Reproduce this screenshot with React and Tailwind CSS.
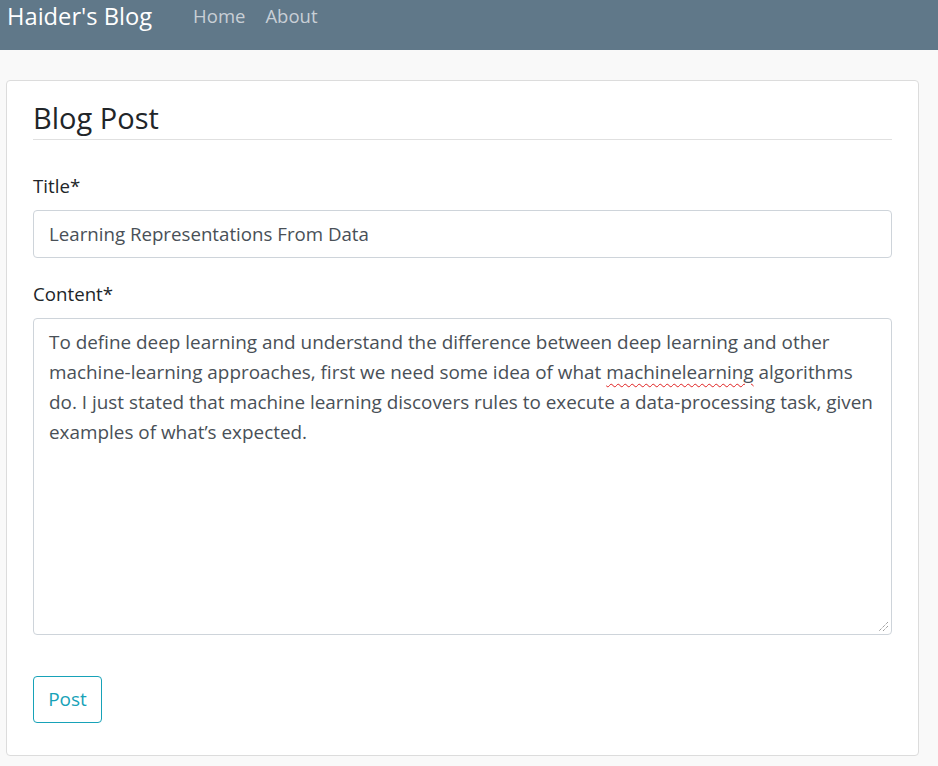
export default function App() {
  const font = { fontFamily: '"Open Sans", "Noto Sans", sans-serif' };
  return (
    <div className="min-h-[766px] bg-[#f9f9f9] text-[#212529]" style={font}>
      <nav className="h-[50px] bg-[#607889] flex items-start">
        <a className="ml-[7px] mt-[0px] text-[23.7px] leading-[33px] text-white">Haider's Blog</a>
        <div className="ml-[41px] flex gap-[20px] mt-[2px]">
          <a className="text-[18.5px] leading-[27px] text-[#c8cfd6]">Home</a>
          <a className="text-[18.5px] leading-[27px] text-[#c8cfd6]">About</a>
        </div>
      </nav>
      <div className="mt-[30px] ml-[6px] w-[913px] h-[676px] bg-white border border-[#dcdcdc] rounded-[4px] px-[26px] pt-[17px]">
        <h2 className="text-[29px] leading-[40px] font-normal pb-[1px] border-b border-[#e0e0e0]">Blog Post</h2>
        <label className="block mt-[32px] text-[18.7px] leading-[28px]">Title*</label>
        <div className="mt-[10px] h-[48px] border border-[#ced4da] rounded-[4px] px-[15px] pt-[1px] flex items-center text-[18.7px] text-[#495057]">
          Learning Representations From Data
        </div>
        <label className="block mt-[22px] text-[18.7px] leading-[28px]">Content*</label>
        <div className="relative mt-[10px] h-[317px] border border-[#ced4da] rounded-[4px] px-[15px] pt-[8px] text-[18.9px] leading-[30px] text-[#495057]">
          To define deep learning and understand the difference between deep learning and other<br />
          machine-learning approaches, first we need some idea of what{' '}
          <span className="underline decoration-wavy decoration-[#e02020] decoration-1 underline-offset-[4px]">machinelearning</span> algorithms<br />
          do. I just stated that machine learning discovers rules to execute a data-processing task, given<br />
          examples of what’s expected.
          <svg className="absolute right-[2px] bottom-[2px]" width="11" height="11" viewBox="0 0 11 11">
            <line x1="10" y1="1" x2="1" y2="10" stroke="#777" strokeWidth="1" strokeDasharray="1 1" />
            <line x1="10" y1="5" x2="5" y2="10" stroke="#777" strokeWidth="1" strokeDasharray="1 1" />
          </svg>
        </div>
        <button className="mt-[41px] w-[69px] h-[47px] border border-[#17a2b8] rounded-[4px] text-[#17a2b8] text-[19px]">Post</button>
      </div>
    </div>
  );
}
